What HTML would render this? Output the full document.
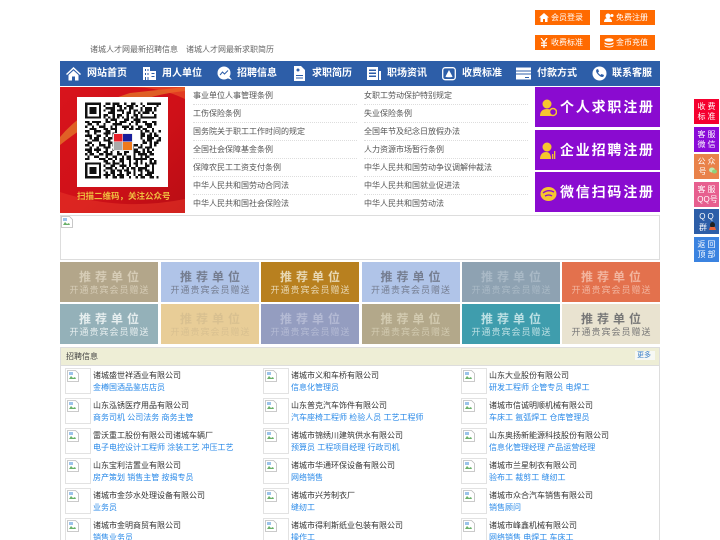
<!DOCTYPE html>
<html lang="zh"><head><meta charset="utf-8"><title>诸城人才网</title>
<style>
*{margin:0;padding:0;box-sizing:border-box}
html,body{width:720px;height:540px;overflow:hidden;background:#fff}
body{position:relative;font-family:"Liberation Sans","Noto Sans CJK SC",sans-serif;font-size:8px;color:#555;filter:blur(.35px)}
.a{position:absolute;white-space:nowrap}
.tb{position:absolute;width:55px;height:15px;background:#ff6a00;color:#fff;font-size:8px;line-height:15px}
.tb span{position:absolute;left:16px;top:0}
.tb svg{position:absolute;left:4px;top:3px}
.nav{position:absolute;left:60px;top:61px;width:600px;height:25px;background:#2d5ea8}
.nav span{position:absolute;top:0;color:#fff;font-size:10px;font-weight:bold;line-height:25px}
.nav svg{position:absolute;top:5px}
.l{position:absolute;width:164px;height:18px;line-height:18px;color:#555;border-bottom:1px dotted #ddd;white-space:nowrap}
.p{position:absolute;left:535px;width:125px;height:40px;background:#8a0bd0;color:#fff;font-size:14px;font-weight:bold;letter-spacing:1.8px;line-height:41px;padding-left:25px;white-space:nowrap}
.p svg{position:absolute;left:5px;top:12px}
.t{position:absolute;width:98px;height:40px;text-align:center;white-space:nowrap}
.t b{display:block;font-size:12px;font-weight:bold;letter-spacing:4px;line-height:14px;margin-top:8px;padding-left:4px}
.t i{display:block;font-style:normal;font-size:9px;letter-spacing:1px;line-height:12px;margin-top:0;padding-left:1px}
.th{position:absolute;width:26px;height:26px;border:1px solid #e2e2e2;background:#fff}
.th svg{position:absolute;left:1px;top:1px}
.n{position:absolute;color:#333;white-space:nowrap;line-height:12px}
.j{position:absolute;color:#2a8ae8;white-space:nowrap;line-height:12px}
.s{position:absolute;left:694px;width:25px;height:25px;color:#fff;font-size:8px;line-height:10px;text-align:center;letter-spacing:2px;padding-top:3px;padding-left:2px}
</style></head><body>
<svg width="0" height="0" style="position:absolute"><defs><g id="bk"><path d="M.5.5h8l3 3v8H.5z" fill="#fff" stroke="#bbb" stroke-width=".8"/><path d="M2 2h4v3H2z" fill="#9cc3ea"/><path d="M2 9l2-3 2 2 2-1 1 2z" fill="#6ab06a"/></g></defs></svg>

<div class="tb" style="left:535px;top:10px"><svg width="10" height="9" viewBox="0 0 10 9"><path d="M5 0L0 4.500h1.500V9h2.500V6h2v3h2.500V4.500H10z" fill="#fff"/></svg><span>会员登录</span></div>
<div class="tb" style="left:600px;top:10px"><svg width="10" height="9" viewBox="0 0 10 9"><circle cx="4" cy="3" r="2.500" fill="#fff"/><path d="M0 9c0-3 2-4 4-4s4 1 4 4z" fill="#fff"/><circle cx="8" cy="2.500" r="1.500" fill="#fff"/></svg><span>免费注册</span></div>
<div class="tb" style="left:535px;top:35px"><svg width="10" height="10" viewBox="0 0 10 10"><path d="M2 0l3 4 3-4M5 4v6M2 5h6M2 7.500h6" fill="none" stroke="#fff" stroke-width="1.200"/></svg><span>收费标准</span></div>
<div class="tb" style="left:600px;top:35px"><svg width="10" height="10" viewBox="0 0 10 10"><ellipse cx="5" cy="2" rx="4.500" ry="1.800" fill="#fff"/><path d="M.5 4c1 2 8 2 9 0v1.500c-1 2-8 2-9 0zM.5 7c1 2 8 2 9 0v1c-1 2-8 2-9 0z" fill="#fff"/></svg><span>金币充值</span></div>

<div class="a" style="left:90px;top:45px;line-height:10px;color:#666">诸城人才网最新招聘信息</div>
<div class="a" style="left:186px;top:45px;line-height:10px;color:#666">诸城人才网最新求职简历</div>

<div class="nav">
<svg style="left:6px" width="15" height="15" viewBox="0 0 15 15"><path d="M7.500 1L0 8l1 1 6.500-6 6.500 6 1-1z" fill="#fff"/><path d="M2.500 9l5-4.500 5 4.500v5.500H9v-4H6v4H2.500z" fill="#fff"/></svg>
<span style="left:27px">网站首页</span>
<svg style="left:83px" width="13" height="15" viewBox="0 0 13 15"><path d="M0 1h7v13H0zM7 5h6v9H7z" fill="#fff"/><path d="M2 3h1v2H2zM4.500 3h1v2h-1zM2 7h1v2H2zM4.500 7h1v2h-1zM2 11h1v3H2zM4.500 11h1v3h-1zM8.500 7h3v1h-3zM8.500 10h3v1h-3z" fill="#2d5ea8"/></svg>
<span style="left:102px">用人单位</span>
<svg style="left:157px" width="15" height="15" viewBox="0 0 15 15"><circle cx="7" cy="7" r="6.500" fill="#fff"/><path d="M12 10l3 4-5-2z" fill="#fff"/><path d="M3 9l2.500-3 2 2 3.500-3.500" fill="none" stroke="#2d5ea8" stroke-width="1"/></svg>
<span style="left:177px">招聘信息</span>
<svg style="left:234px" width="11" height="15" viewBox="0 0 11 15"><path d="M0 0h7l4 4v11H0z" fill="#fff"/><path d="M2 9h7v1H2zM2 11.500h7v1H2z" fill="#2d5ea8"/><circle cx="4" cy="4" r="1.500" fill="#2d5ea8"/></svg>
<span style="left:252px">求职简历</span>
<svg style="left:307px" width="14" height="15" viewBox="0 0 14 15"><path d="M0 1h11v13H0z" fill="#fff"/><path d="M2 3.500h7v1.500H2zM2 6.500h7v1.500H2zM2 9.500h7v1.500H2z" fill="#2d5ea8"/><path d="M12 5h2v9h-2z" fill="#fff"/></svg>
<span style="left:327px">职场资讯</span>
<svg style="left:382px" width="14" height="15" viewBox="0 0 14 15"><rect x=".7" y="1.700" width="12.600" height="12" rx="2.500" fill="none" stroke="#fff" stroke-width="1.300"/><path d="M7 4l3.500 6.500c0 1-7 1-7 0z" fill="#fff"/></svg>
<span style="left:402px">收费标准</span>
<svg style="left:456px" width="15" height="15" viewBox="0 0 15 15"><path d="M0 1.500h15v3H0zM0 5.500h15v2H0zM0 8.500h15v5H0z" fill="#fff"/><path d="M9 11h4v1H9z" fill="#2d5ea8"/></svg>
<span style="left:477px">付款方式</span>
<svg style="left:532px" width="15" height="15" viewBox="0 0 15 15"><circle cx="7.500" cy="7.500" r="7" fill="#fff"/><path d="M4.500 3.500l1.500-.5 1 2.500-1 1c.5 1 1.500 2 2.500 2.500l1-1 2.500 1-.5 1.500c-1 1-3 .5-5-1.500s-3-4-2-5.500z" fill="#2d5ea8"/></svg>
<span style="left:552px">联系客服</span>
</div>

<div class="a" style="left:60px;top:87px;width:125px;height:126px;background:linear-gradient(135deg,#d8141c 0%,#cf1018 55%,#b90d14 100%);overflow:hidden">
<svg width="125" height="126" style="position:absolute;left:0;top:0"><path d="M0 50Q25 20 70 6L125 0V4Q60 10 0 58z" fill="#e9a030" opacity=".55"/><path d="M70 0H125V12Q100 0 70 0z" fill="#ef5a2a" opacity=".6"/><path d="M0 105Q60 125 125 112V126H0z" fill="#e93a2a" opacity=".5"/></svg>
<div class="a" style="left:17px;top:10px;width:91px;height:90px;background:#fff"></div>
<svg class="a" style="left:25px;top:15px" width="76" height="77" viewBox="0 0 33 33" shape-rendering="crispEdges">
<path fill="none" stroke="#111" stroke-width="1" d="M0 .5h7m2 0h2m1 0h3m2 0h1m2 0h2m2 0h1m2 0h7M0 1.500h1m5 0h1m1 0h1m3 0h1m1 0h2m2 0h3m1 0h1m2 0h1m5 0h1M0 2.500h1m1 0h3m1 0h1m2 0h4m2 0h1m1 0h1m1 0h2m3 0h1m1 0h3m1 0h1M0 3.500h1m1 0h3m1 0h1m1 0h1m2 0h2m1 0h3m2 0h1m1 0h2m1 0h1m1 0h3m1 0h1M0 4.500h1m1 0h3m1 0h1m3 0h3m3 0h1m1 0h2m1 0h1m1 0h1m1 0h3m1 0h1M0 5.500h1m5 0h1m1 0h2m2 0h1m1 0h2m2 0h1m2 0h2m1 0h1m5 0h1M0 6.500h7m1 0h1m1 0h1m1 0h1m1 0h1m1 0h1m1 0h1m1 0h1m1 0h1m1 0h7M9 7.500h1m1 0h3m3 0h2m2 0h3M0 8.500h2m1 0h4m2 0h2m2 0h1m1 0h3m2 0h1m1 0h2m1 0h2m2 0h2M1 9.500h2m2 0h1m2 0h1m3 0h4m3 0h1m2 0h1m3 0h3m1 0h1M0 10.500h1m2 0h1m2 0h3m2 0h1m1 0h1m2 0h3m1 0h1m2 0h2m2 0h2M2 11.500h3m3 0h2m1 0h3m3 0h1m1 0h2m1 0h2m1 0h2m2 0h1M0 12.500h2m2 0h3m2 0h2m2 0h1m10 0h1m1 0h2m1 0h1m2 0h1M1 13.500h1m2 0h1m3 0h3m1 0h2m10 0h2m2 0h1m1 0h1M0 14.500h3m2 0h2m2 0h1m2 0h1m11 0h2m1 0h2m1 0h2M2 15.500h1m1 0h2m2 0h1m1 0h2m1 0h1m10 0h1m2 0h3m2 0h1M0 16.500h1m2 0h3m2 0h3m2 0h1m11 0h1m1 0h2m2 0h2M1 17.500h2m3 0h1m3 0h2m2 0h1m10 0h2m1 0h1m1 0h2M0 18.500h2m1 0h1m2 0h3m1 0h1m1 0h2m1 0h2m1 0h2m1 0h2m1 0h1m3 0h1m1 0h1M2 19.500h1m2 0h1m2 0h3m2 0h2m2 0h1m2 0h1m2 0h2m1 0h3M0 20.500h3m1 0h3m2 0h1m2 0h3m1 0h2m1 0h1m1 0h2m2 0h1m1 0h1m1 0h1M1 21.500h2m2 0h1m2 0h2m1 0h1m2 0h1m2 0h2m2 0h3m1 0h1m1 0h2M0 22.500h1m1 0h2m2 0h2m1 0h3m2 0h2m1 0h1m3 0h1m1 0h4m1 0h2M1 23.500h1m2 0h2m3 0h1m2 0h2m2 0h1m1 0h2m1 0h1m2 0h1m1 0h2M0 24.500h2m4 0h3m1 0h2m1 0h1m1 0h2m1 0h2m1 0h6m1 0h2M8 25.500h2m2 0h1m2 0h2m2 0h1m2 0h1m1 0h1m3 0h1m1 0h1M0 26.500h7m2 0h2m1 0h3m1 0h1m2 0h1m1 0h2m1 0h1m1 0h1m1 0h3M0 27.500h1m5 0h1m1 0h1m2 0h2m2 0h3m1 0h1m2 0h1m3 0h2m1 0h1M0 28.500h1m1 0h3m1 0h1m2 0h3m1 0h1m2 0h1m1 0h1m1 0h2m1 0h4m2 0h1M0 29.500h1m1 0h3m1 0h1m1 0h1m2 0h2m1 0h2m1 0h2m2 0h1m1 0h2m1 0h2m1 0h1M0 30.500h1m1 0h3m1 0h1m2 0h1m1 0h2m2 0h1m2 0h2m1 0h1m2 0h1m2 0h3M0 31.500h1m5 0h1m1 0h3m1 0h1m1 0h3m1 0h1m2 0h1m1 0h2m1 0h3M0 32.500h7m2 0h1m2 0h2m1 0h2m2 0h1m2 0h1m1 0h2m2 0h2m1 0h1"/></svg>
<svg class="a" style="left:53px;top:46px" width="20" height="18"><rect width="20" height="18" rx="2" fill="#eee"/><rect x="1" y="1" width="8.500" height="7.500" fill="#e8202a"/><rect x="10" y="1" width="9" height="7.500" fill="#1a1f9c"/><rect x="1" y="9" width="8.500" height="8" fill="#a9a9a9"/><rect x="10" y="9" width="9" height="8" fill="#ef7a1c"/></svg>
<div class="a" style="left:17px;top:103px;font-size:8.500px;font-weight:bold;color:#f0c040;line-height:12px">扫描二维码，关注公众号</div>
</div>

<div class="l" style="left:193px;top:87px">事业单位人事管理条例</div><div class="l" style="left:364px;top:87px">女职工劳动保护特别规定</div>
<div class="l" style="left:193px;top:105px">工伤保险条例</div><div class="l" style="left:364px;top:105px">失业保险条例</div>
<div class="l" style="left:193px;top:123px">国务院关于职工工作时间的规定</div><div class="l" style="left:364px;top:123px">全国年节及纪念日放假办法</div>
<div class="l" style="left:193px;top:141px">全国社会保障基金条例</div><div class="l" style="left:364px;top:141px">人力资源市场暂行条例</div>
<div class="l" style="left:193px;top:159px">保障农民工工资支付条例</div><div class="l" style="left:364px;top:159px">中华人民共和国劳动争议调解仲裁法</div>
<div class="l" style="left:193px;top:177px">中华人民共和国劳动合同法</div><div class="l" style="left:364px;top:177px">中华人民共和国就业促进法</div>
<div class="l" style="left:193px;top:195px;border:0">中华人民共和国社会保险法</div><div class="l" style="left:364px;top:195px;border:0">中华人民共和国劳动法</div>

<div class="p" style="top:87px"><svg width="17" height="18" viewBox="0 0 17 18"><circle cx="7" cy="5" r="4.500" fill="#f6c52e"/><path d="M0 17c0-5 3-7 7-7s5 2 5 7z" fill="#f6c52e"/><circle cx="13" cy="13" r="3.500" fill="#8a0bd0" stroke="#f6c52e" stroke-width="1.500"/></svg>个人求职注册</div>
<div class="p" style="top:130px"><svg width="17" height="18" viewBox="0 0 17 18"><circle cx="7" cy="5" r="4.500" fill="#f6c52e"/><path d="M0 17c0-5 3-7 6-7s5 2 5 7z" fill="#f6c52e"/><path d="M12 12h1.300v5H12zM14 9h1.300v8H14z" fill="#f6c52e"/></svg>企业招聘注册</div>
<div class="p" style="top:172px"><svg width="17" height="18" viewBox="0 0 17 18"><ellipse cx="8.500" cy="10" rx="8" ry="7" fill="#f6c52e"/><path d="M3 9q5-4 11-1M5 12q4-2 7 0" fill="none" stroke="#8a0bd0" stroke-width="1.300"/></svg>微信扫码注册</div>

<div class="a" style="left:60px;top:215px;width:600px;height:45px;border:1px solid #ddd;background:#fff"><svg class="a" style="left:0;top:0" width="12" height="12"><use href="#bk"/></svg></div>

<div class="t" style="left:60px;top:262px;background:#b3a68a;color:#d6ccb6"><b>推荐单位</b><i>开通贵宾会员赠送</i></div>
<div class="t" style="left:161px;top:262px;background:#b0c4e8;color:#757d90"><b>推荐单位</b><i>开通贵宾会员赠送</i></div>
<div class="t" style="left:261px;top:262px;background:#b8801f;color:#e8d8b4"><b>推荐单位</b><i>开通贵宾会员赠送</i></div>
<div class="t" style="left:361.500px;top:262px;background:#b0c4e8;color:#757d90"><b>推荐单位</b><i>开通贵宾会员赠送</i></div>
<div class="t" style="left:462px;top:262px;background:#8ea2b2;color:#a9b9c6"><b>推荐单位</b><i>开通贵宾会员赠送</i></div>
<div class="t" style="left:562px;top:262px;background:#e3714d;color:#f2b49e"><b>推荐单位</b><i>开通贵宾会员赠送</i></div>
<div class="t" style="left:60px;top:304px;background:#94b1b9;color:#e6eeef"><b>推荐单位</b><i>开通贵宾会员赠送</i></div>
<div class="t" style="left:161px;top:304px;background:#e8cd97;color:#d8c090"><b>推荐单位</b><i>开通贵宾会员赠送</i></div>
<div class="t" style="left:261px;top:304px;background:#949dc0;color:#b4bad4"><b>推荐单位</b><i>开通贵宾会员赠送</i></div>
<div class="t" style="left:361.500px;top:304px;background:#b3a88a;color:#d2cab0"><b>推荐单位</b><i>开通贵宾会员赠送</i></div>
<div class="t" style="left:462px;top:304px;background:#3f9dad;color:#bce0e4"><b>推荐单位</b><i>开通贵宾会员赠送</i></div>
<div class="t" style="left:562px;top:304px;background:#e9e3d0;color:#777"><b>推荐单位</b><i>开通贵宾会员赠送</i></div>

<div class="a" style="left:60px;top:347px;width:600px;height:200px;border:1px solid #ddd;background:#fff"></div>
<div class="a" style="left:60px;top:347px;width:600px;height:19px;border:1px solid #ddd;background:#eeeed6;line-height:17px;padding-left:5px;color:#444">招聘信息</div>
<div class="a" style="left:635px;top:351px;width:20px;height:9px;background:#f6f8f4;color:#3a7ec8;font-size:7px;line-height:9px;padding-left:2px">更多</div>

<div class="th" style="left:65px;top:368px"><svg width="12" height="12"><use href="#bk"/></svg></div><div class="n" style="left:93px;top:370px">诸城盛世祥酒业有限公司</div><div class="j" style="left:93px;top:382px">金樽国酒品鉴店店员</div>
<div class="th" style="left:263px;top:368px"><svg width="12" height="12"><use href="#bk"/></svg></div><div class="n" style="left:291px;top:370px">诸城市义和车桥有限公司</div><div class="j" style="left:291px;top:382px">信息化管理员</div>
<div class="th" style="left:461px;top:368px"><svg width="12" height="12"><use href="#bk"/></svg></div><div class="n" style="left:489px;top:370px">山东大业股份有限公司</div><div class="j" style="left:489px;top:382px">研发工程师 企管专员 电焊工</div>

<div class="th" style="left:65px;top:398px"><svg width="12" height="12"><use href="#bk"/></svg></div><div class="n" style="left:93px;top:400px">山东泓锈医疗用品有限公司</div><div class="j" style="left:93px;top:412px">商务司机 公司法务 商务主管</div>
<div class="th" style="left:263px;top:398px"><svg width="12" height="12"><use href="#bk"/></svg></div><div class="n" style="left:291px;top:400px">山东普克汽车饰件有限公司</div><div class="j" style="left:291px;top:412px">汽车座椅工程师 检验人员 工艺工程师</div>
<div class="th" style="left:461px;top:398px"><svg width="12" height="12"><use href="#bk"/></svg></div><div class="n" style="left:489px;top:400px">诸城市信诚明顺机械有限公司</div><div class="j" style="left:489px;top:412px">车床工 氩弧焊工 仓库管理员</div>

<div class="th" style="left:65px;top:428px"><svg width="12" height="12"><use href="#bk"/></svg></div><div class="n" style="left:93px;top:430px">雷沃重工股份有限公司诸城车辆厂</div><div class="j" style="left:93px;top:442px">电子电控设计工程师 涂装工艺 冲压工艺</div>
<div class="th" style="left:263px;top:428px"><svg width="12" height="12"><use href="#bk"/></svg></div><div class="n" style="left:291px;top:430px">诸城市锦绣川建筑供水有限公司</div><div class="j" style="left:291px;top:442px">预算员 工程项目经理 行政司机</div>
<div class="th" style="left:461px;top:428px"><svg width="12" height="12"><use href="#bk"/></svg></div><div class="n" style="left:489px;top:430px">山东奥扬新能源科技股份有限公司</div><div class="j" style="left:489px;top:442px">信息化管理经理 产品运营经理</div>

<div class="th" style="left:65px;top:458px"><svg width="12" height="12"><use href="#bk"/></svg></div><div class="n" style="left:93px;top:460px">山东宝利洁置业有限公司</div><div class="j" style="left:93px;top:472px">房产策划 销售主管 按揭专员</div>
<div class="th" style="left:263px;top:458px"><svg width="12" height="12"><use href="#bk"/></svg></div><div class="n" style="left:291px;top:460px">诸城市华通环保设备有限公司</div><div class="j" style="left:291px;top:472px">网络销售</div>
<div class="th" style="left:461px;top:458px"><svg width="12" height="12"><use href="#bk"/></svg></div><div class="n" style="left:489px;top:460px">诸城市兰星制衣有限公司</div><div class="j" style="left:489px;top:472px">验布工 裁剪工 缝纫工</div>

<div class="th" style="left:65px;top:488px"><svg width="12" height="12"><use href="#bk"/></svg></div><div class="n" style="left:93px;top:490px">诸城市金莎水处理设备有限公司</div><div class="j" style="left:93px;top:502px">业务员</div>
<div class="th" style="left:263px;top:488px"><svg width="12" height="12"><use href="#bk"/></svg></div><div class="n" style="left:291px;top:490px">诸城市兴芳制衣厂</div><div class="j" style="left:291px;top:502px">缝纫工</div>
<div class="th" style="left:461px;top:488px"><svg width="12" height="12"><use href="#bk"/></svg></div><div class="n" style="left:489px;top:490px">诸城市众合汽车销售有限公司</div><div class="j" style="left:489px;top:502px">销售顾问</div>

<div class="th" style="left:65px;top:518px"><svg width="12" height="12"><use href="#bk"/></svg></div><div class="n" style="left:93px;top:520px">诸城市金明商贸有限公司</div><div class="j" style="left:93px;top:532px">销售业务员</div>
<div class="th" style="left:263px;top:518px"><svg width="12" height="12"><use href="#bk"/></svg></div><div class="n" style="left:291px;top:520px">诸城市得利斯纸业包装有限公司</div><div class="j" style="left:291px;top:532px">操作工</div>
<div class="th" style="left:461px;top:518px"><svg width="12" height="12"><use href="#bk"/></svg></div><div class="n" style="left:489px;top:520px">诸城市峰鑫机械有限公司</div><div class="j" style="left:489px;top:532px">网络销售 电焊工 车床工</div>

<div class="s" style="top:99px;background:#f5002f">收费<br>标准</div>
<div class="s" style="top:127px;background:#8a0bd8">客服<br>微信</div>
<div class="s" style="top:154px;background:#e9824a">公众<br>号<svg width="8" height="7" viewBox="0 0 8 7"><ellipse cx="3" cy="3" rx="3" ry="2.500" fill="#bfe8b0"/><ellipse cx="5.500" cy="4.500" rx="2.500" ry="2" fill="#8ed07a"/></svg></div>
<div class="s" style="top:182px;background:#e75f8f">客服<br><span style="letter-spacing:0">QQ号</span></div>
<div class="s" style="top:209px;background:#2d5ea8">QQ<br>群<svg width="7" height="8" viewBox="0 0 7 8"><ellipse cx="3.500" cy="3" rx="2.500" ry="3" fill="#222"/><path d="M1 5h5l1 3H0z" fill="#e8643a"/></svg></div>
<div class="s" style="top:237px;background:#3b83e0">返回<br>顶部</div>
</body></html>
